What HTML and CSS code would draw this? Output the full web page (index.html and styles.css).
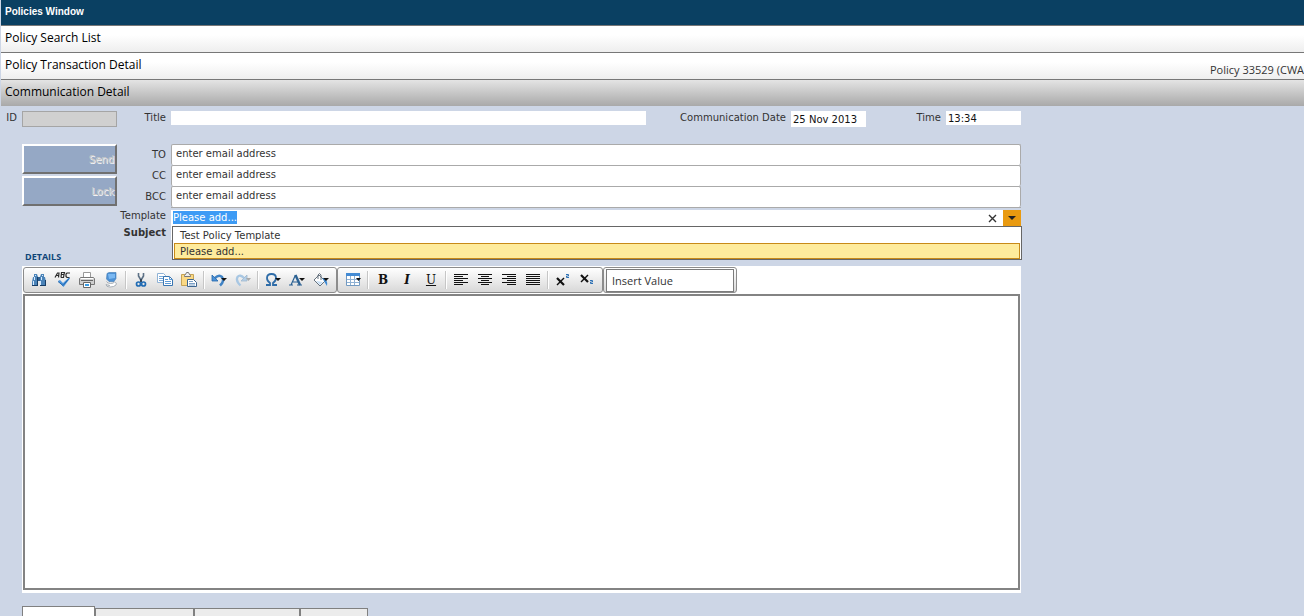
FILE: index.html
```html
<!DOCTYPE html>
<html lang="en">
<head>
<meta charset="utf-8">
<title>Policies Window</title>
<link rel="stylesheet" href="styles.css">
</head>
<body>
<header class="titlebar"><h1 class="window-title">Policies Window</h1></header>
<nav class="sections">
  <button class="section" type="button">Policy Search List</button>
  <button class="section" type="button"><span>Policy Transaction Detail</span><span class="policy-ref">Policy 33529 (CWA</span></button>
  <button class="section section-active" type="button">Communication Detail</button>
</nav>
<main class="content">
  <form class="form">
    <div class="summary">
      <label class="label id-label" for="id">ID</label>
      <input class="text id-field" id="id" disabled>
      <label class="label" for="title">Title</label>
      <input class="text" id="title">
      <label class="label" for="date">Communication Date</label>
      <input class="text date-field" id="date" value="25 Nov 2013">
      <label class="label" for="time">Time</label>
      <input class="text" id="time" value="13:34">
    </div>
    <div class="message">
      <div class="actions">
        <button class="action" type="button" disabled>Send</button>
        <button class="action" type="button" disabled>Lock</button>
      </div>
      <div class="fields">
        <label class="label email-label" for="to">TO</label>
        <input class="email" id="to" value="enter email address">
        <label class="label email-label" for="cc">CC</label>
        <input class="email" id="cc" value="enter email address">
        <label class="label email-label" for="bcc">BCC</label>
        <input class="email" id="bcc" value="enter email address">
        <label class="label template-label" for="template">Template</label>
        <div class="combo">
          <input class="combo-input" id="template" role="combobox" aria-expanded="true" aria-controls="templates" value="Please add...">
          <button class="combo-clear" type="button" aria-label="Clear"><svg width="9" height="9" viewBox="0 0 9 9"><path d="M1 1l7 7M8 1L1 8" stroke="#333" stroke-width="1.4"/></svg></button>
          <button class="combo-toggle" type="button" aria-label="Open list"><svg width="8" height="4" viewBox="0 0 8 4"><path d="M0 0h8L4 4z" fill="#222"/></svg></button>
          <ul class="options" id="templates" role="listbox">
            <li class="option" role="option">Test Policy Template</li>
            <li class="option option-selected" role="option" aria-selected="true">Please add...</li>
          </ul>
        </div>
        <label class="label label-strong" for="subject">Subject</label>
        <input class="text" id="subject">
      </div>
    </div>
  </form>
  <h2 class="details-title">DETAILS</h2>
  <section class="editor">
    <div class="toolbar" role="toolbar">
      <div class="group">
        <button class="tool" type="button" aria-label="Find"><svg width="16" height="16" viewBox="0 0 16 16"><path d="M3 2h3l1 3v9H1v-4l1-5h1zM10 2h3v3h1l1 5v4H9V5z" fill="#4a83b8"/><path d="M7 5h2v4H7z" fill="#2c5f92"/><path d="M1 13h6v1H1zM9 13h6v1H9zM6 5h1v8H6zM14 8h1v5h-1z" fill="#173d65"/><path d="M3 5h1v3H3v5H2V9h1zM10 5h1v3h-1v5H9V9h1zM4 3h1v1H4zM11 3h1v1h-1z" fill="#d7eaff"/></svg></button>
        <button class="tool" type="button" aria-label="Spelling"><svg width="18" height="16" viewBox="0 0 18 16"><path d="M1 5.500L3.500 1H5L4.500 5.500M2.500 3.500h2M7 5.500L7.500.500h3l-.5 2H7.500h2.500l-.5 3H7M16 1h-3l-1 1v2.500l1 1h2.500" fill="none" stroke="#2a2a2a" stroke-width="1.200"/><path d="M4 9l2-1 3 3 6-5.500 1 1L9.500 15z" fill="#4b94dc"/><path d="M4 9.500l5 4 6-7" fill="none" stroke="#2469ae"/></svg></button>
        <button class="tool" type="button" aria-label="Print"><svg width="16" height="16" viewBox="0 0 16 16"><path d="M4.500 6V.5h7V6" fill="#fff" stroke="#999"/><path d="M1.500 5.500h13l1 1v6H.5v-6z" fill="#cfcfcf" stroke="#777"/><path d="M2 8.500h12" stroke="#666"/><path d="M4.500 10.500h7v5h-7z" fill="#fff" stroke="#666"/><path d="M6 12h4v2H6z" fill="#3a9ce4"/><path d="M2 6.500h12" stroke="#fff"/></svg></button>
        <button class="tool" type="button" aria-label="Preview"><svg width="16" height="16" viewBox="0 0 16 16"><path d="M4 1.500L6 .5h7v6l-2 3H6L3.500 7z" fill="#4d91d5" stroke="#3f79b4" stroke-width=".6"/><path d="M5 2h7v4L6 7z" fill="#7ab8f2"/><path d="M3.500 9.500q1 2 4 2t4-1.500q3 1 1.500 3-2 2-6 2-4 0-4-2.500 2 1 4 1" fill="#fff" stroke="#98a1aa" stroke-width=".8"/></svg></button>
        <span class="divider"></span>
        <button class="tool" type="button" aria-label="Cut"><svg width="16" height="16" viewBox="0 0 16 16"><path d="M5.500 1v3L8.500 9M10.500 1v3L7.500 9" fill="none" stroke="#5d7186" stroke-width="1.600"/><path d="M8 7v3" stroke="#35475a" stroke-width="2"/><ellipse cx="5.500" cy="12" rx="2" ry="2" fill="none" stroke="#216cb4" stroke-width="1.700"/><ellipse cx="10.500" cy="12" rx="2" ry="2" fill="none" stroke="#216cb4" stroke-width="1.700"/></svg></button>
        <button class="tool" type="button" aria-label="Copy"><svg width="16" height="16" viewBox="0 0 16 16"><path d="M.5 1.500h6l2 2v7h-8z" fill="#fff" stroke="#8fb2d5"/><path d="M2 4.500h5M2 6.500h5M2 8.500h5" stroke="#77a8da"/><path d="M6.500 4.500h6l3 3v6h-9z" fill="#fff" stroke="#3975b1"/><path d="M12.500 5v2.500H15M8 7.500h3M8 9.500h6M8 11.500h6" fill="none" stroke="#5b99d6"/></svg></button>
        <button class="tool" type="button" aria-label="Paste"><svg width="16" height="16" viewBox="0 0 16 16"><path d="M.5 2.500h12v11H.5z" fill="#fbd985" stroke="#c6a355"/><path d="M3.500 3.500l1-1L5.500.500h2l1 2 1 1v1h-6z" fill="#eee" stroke="#777"/><path d="M6.500 7.500h6l3 3v4h-9z" fill="#fff" stroke="#3d6590"/><path d="M8 9.500h4M8 11.500h6M8 13h6" stroke="#7ba0c6"/></svg></button>
        <span class="divider"></span>
        <button class="tool" type="button" aria-label="Undo"><svg width="16" height="16" viewBox="0 0 16 16"><path d="M4 6q4-4 7-1 3 4-2 8.500" fill="none" stroke="#3f82c4" stroke-width="2.500"/><path d="M1 3v6h6z" fill="#4b91d8" stroke="#2467aa" stroke-width=".8"/><path d="M10 6h6l-3 3z" fill="#111"/></svg></button>
        <button class="tool" type="button" aria-label="Redo"><svg width="16" height="16" viewBox="0 0 16 16"><path d="M9 6Q5 2 2.500 5q-2 4 3 8.500" fill="none" stroke="#a8c7e3" stroke-width="2.300"/><path d="M12 3v6H6z" fill="#b5cfe7" stroke="#9eb7ce" stroke-width=".8"/><path d="M11 6h5l-2.500 3z" fill="#aaa"/></svg></button>
        <span class="divider"></span>
        <button class="tool" type="button" aria-label="Symbol"><svg width="16" height="16" viewBox="0 0 16 16"><path d="M1 13h4v-2Q2 9 2 6q0-4 4.500-4T11 6q0 3-3 5v2h4" fill="none" stroke="#2e6ca8" stroke-width="1.800"/><path d="M10 6h6l-3 3z" fill="#111"/></svg></button>
        <button class="tool" type="button" aria-label="Text colour"><svg width="16" height="16" viewBox="0 0 16 16"><path d="M2 13L6.500 3M4 10h5M0 13h4M8 13h5" fill="none" stroke="#2b6193" stroke-width="1.200"/><path d="M6.500 3L11 13" stroke="#2b6193" stroke-width="2.400"/><path d="M10 6h6l-3 3z" fill="#111"/></svg></button>
        <button class="tool" type="button" aria-label="Fill colour"><svg width="16" height="16" viewBox="0 0 16 16"><path d="M1 8l5-5 6 6-5 5z" fill="#fff" stroke="#66727e"/><path d="M5 7V3q1.500-3 3 0v5" fill="none" stroke="#66727e"/><path d="M9 6q6 0 5 8-2-3-3-5z" fill="#3f8bd3"/><path d="M3 9l4 4 3-3z" fill="#c8dff5"/><path d="M10 6h6l-3 3z" fill="#111"/></svg></button>
      </div>
      <div class="group">
        <button class="tool" type="button" aria-label="Table"><svg width="16" height="16" viewBox="0 0 16 16"><path d="M1.500 1.500h13v12h-13z" fill="#fff" stroke="#7199c1"/><path d="M1 1h14v3H1z" fill="#438bd4"/><path d="M2 7.500h12M2 10.500h12M5.500 4v9M9.500 4v9" stroke="#8fb1d3"/><path d="M11 6h5l-2.500 3z" fill="#111"/></svg></button>
        <span class="divider"></span>
        <button class="tool tool-bold" type="button" aria-label="Bold">B</button>
        <button class="tool tool-italic" type="button" aria-label="Italic">I</button>
        <button class="tool tool-underline" type="button" aria-label="Underline">U</button>
        <span class="divider"></span>
        <button class="tool" type="button" aria-label="Align left"><svg width="16" height="16" viewBox="0 0 16 16"><path d="M1 2.500h14M1 4.500h9M1 6.500h14M1 8.500h9M1 10.500h14M1 12.500h9" stroke="#111"/></svg></button>
        <button class="tool" type="button" aria-label="Align centre"><svg width="16" height="16" viewBox="0 0 16 16"><path d="M1 2.500h14M4 4.500h8M1 6.500h14M4 8.500h8M1 10.500h14M4 12.500h8" stroke="#111"/></svg></button>
        <button class="tool" type="button" aria-label="Align right"><svg width="16" height="16" viewBox="0 0 16 16"><path d="M1 2.500h14M6 4.500h9M1 6.500h14M6 8.500h9M1 10.500h14M6 12.500h9" stroke="#111"/></svg></button>
        <button class="tool" type="button" aria-label="Justify"><svg width="16" height="16" viewBox="0 0 16 16"><path d="M1 2.500h14M1 4.500h14M1 6.500h14M1 8.500h14M1 10.500h14M1 12.500h14" stroke="#111"/></svg></button>
        <span class="divider"></span>
        <button class="tool" type="button" aria-label="Superscript"><svg width="16" height="16" viewBox="0 0 16 16"><path d="M2 6l7 7" stroke="#111" stroke-width="2.200"/><path d="M9 6l-7 7" stroke="#111" stroke-width="1.500"/><path d="M11 2.500h2.500v1.500H11.500v1.500H14" fill="none" stroke="#2c70b4"/></svg></button>
        <button class="tool" type="button" aria-label="Subscript"><svg width="16" height="16" viewBox="0 0 16 16"><path d="M2 3l7 7" stroke="#111" stroke-width="2.200"/><path d="M9 3l-7 7" stroke="#111" stroke-width="1.500"/><path d="M11 8.500h2.500v1.500H11.500v1.500H14" fill="none" stroke="#2c70b4"/></svg></button>
      </div>
      <div class="group group-value">
        <input class="insert-value" aria-label="Insert Value" value="Insert Value">
      </div>
    </div>
    <textarea class="editor-body" aria-label="Details"></textarea>
  </section>
  <div class="tabs" role="tablist">
    <button class="tab tab-active" type="button" role="tab" aria-label="Tab 1"></button>
    <button class="tab tab-medium" type="button" role="tab" aria-label="Tab 2"></button>
    <button class="tab tab-wide" type="button" role="tab" aria-label="Tab 3"></button>
    <button class="tab tab-narrow" type="button" role="tab" aria-label="Tab 4"></button>
  </div>
</main>
<script src="app.js"></script>
</body>
</html>
```
FILE: styles.css
```css
* {
  box-sizing: border-box;
}

body {
  margin: 0;
  height: 100vh;
  display: flex;
  flex-direction: column;
  overflow: hidden;
  background: #cdd6e6;
  color: #333;
  font: 10px/13px Verdana, "DejaVu Sans", sans-serif;
}

button,
input,
textarea {
  margin: 0;
  padding: 0;
  border: 0;
  border-radius: 0;
  background: #fff;
  color: inherit;
  font: inherit;
  outline: 0;
}

.titlebar {
  display: flex;
  align-items: center;
  height: 25px;
  margin-left: 1px;
  padding: 0 4px 2px;
  background: #0a4062;
}

.window-title {
  margin: 0;
  color: #fff;
  font: bold 10px/14px "Liberation Sans", sans-serif;
}

.sections {
  display: flex;
  flex-direction: column;
  margin-left: 1px;
}

.section {
  display: flex;
  justify-content: space-between;
  align-items: center;
  height: 27px;
  padding: 0 0 2px 4px;
  border-top: 1px solid #777;
  background: linear-gradient(#fff 35%, #eee);
  color: #000;
  font: 12px/16px "Open Sans", sans-serif;
  white-space: nowrap;
}

.section-active {
  background: linear-gradient(#e4e4e4, #a9a9a9);
}

.policy-ref {
  width: 94px;
  padding-top: 10px;
  color: #333;
  font-size: 11px;
  text-align: left;
}

.content {
  flex: 1;
  display: flex;
  flex-direction: column;
  max-width: 1021px;
  padding-top: 5px;
}

.summary {
  display: grid;
  grid-template-columns: 22px 95px 54px 1fr 145px 75px 80px 75px;
  align-items: start;
  height: 33px;
}

.label {
  padding-right: 5px;
  text-align: right;
}

.text {
  width: 100%;
  height: 14px;
  padding-left: 2px;
  color: #111;
}

.date-field {
  height: 16px;
}

.id-field {
  height: 16px;
  border: 1px solid #a5a5a5;
  background: #d0d0d0;
}

.message {
  display: grid;
  grid-template-columns: 95px 1fr;
  margin-left: 22px;
}

.actions {
  display: flex;
  flex-direction: column;
  gap: 2px;
}

.action {
  height: 30px;
  padding-right: 1px;
  border: 2px solid;
  border-color: #fff #707070 #707070 #fff;
  background: #95a8c5;
  color: #c8c8c8;
  text-align: right;
  text-shadow: 1px 1px 0 #f4f4f4;
}

.fields {
  display: grid;
  grid-template-columns: 54px 1fr;
  grid-auto-rows: min-content;
}

.email-label {
  padding-top: 4px;
}

.template-label {
  padding-top: 2px;
}

.email {
  height: 21px;
  padding: 0 4px 4px;
  border: 1px solid #aaa;
  border-bottom-width: 0;
  border-radius: 2px;
}

.combo {
  position: relative;
  display: flex;
  height: 19px;
  padding-top: 2px;
  border-top: 1px solid #aaa;
}

.combo-input {
  flex: 1;
  padding: 0 0 2px 2px;
}

.combo-input::selection {
  background: #3d9bf5;
  color: #fff;
}

.combo-clear,
.combo-toggle {
  display: grid;
  place-items: center;
  width: 22px;
}

.combo-toggle {
  width: 18px;
  background: #e99a10;
}

.options {
  position: absolute;
  top: 18px;
  left: 1px;
  right: -1px;
  z-index: 1;
  margin: 0;
  padding: 0 1px;
  border: 1px solid #666;
  background: #fff;
  list-style: none;
}

.option {
  height: 16px;
  padding: 2px 6px;
  line-height: 13px;
}

.option-selected {
  padding: 1px 5px;
  border: 1px solid #c88a18;
  background: #feeb9c;
}

.label-strong {
  font-weight: bold;
}

.details-title {
  margin: 10px 0 3px 25px;
  color: #0f4577;
  font: bold 9px/13px "Open Sans", sans-serif;
}

.editor {
  flex: 1;
  display: flex;
  flex-direction: column;
  margin-left: 22px;
  padding: 1px 1px 3px;
  background: #fff;
}

.toolbar {
  display: flex;
  height: 27px;
}

.group {
  display: flex;
  align-items: center;
  height: 26px;
  padding: 0 3px;
  border: 1px solid #8c8c8c;
  border-radius: 3px;
  background: linear-gradient(#fff, #d8d8d8);
}

.group-value {
  padding: 0 2px;
}

.tool {
  display: grid;
  place-items: center;
  width: 24px;
  height: 22px;
  background: transparent;
  color: #111;
}

.tool-bold,
.tool-italic,
.tool-underline {
  font: bold 12px/16px "DejaVu Serif", serif;
}

.tool-italic {
  font-style: italic;
}

.tool-underline {
  font-weight: normal;
  text-decoration: underline;
}

.divider {
  width: 2px;
  height: 18px;
  margin: 0 2px;
  border-left: 1px solid #c6c6c6;
  border-right: 1px solid #fff;
}

.insert-value {
  width: 128px;
  height: 23px;
  padding: 0 5px;
  border: 1px solid #7c7c7c;
  font: 11px/16px "Open Sans", sans-serif;
}

.editor-body {
  flex: 1;
  border: 2px solid #838383;
  resize: none;
}

.tabs {
  display: flex;
  align-items: flex-end;
  height: 23px;
  margin-left: 22px;
}

.tab {
  width: 106px;
  height: 8px;
  border: 1px solid #808080;
  border-bottom: 0;
  background: #ececec;
}

.tab-active {
  width: 73px;
  height: 10px;
  background: #fff;
}

.tab-medium {
  width: 99px;
}

.tab-narrow {
  width: 68px;
}
```
FILE: app.js
```js
const template = document.getElementById("template");
template.focus();
template.select();
```
